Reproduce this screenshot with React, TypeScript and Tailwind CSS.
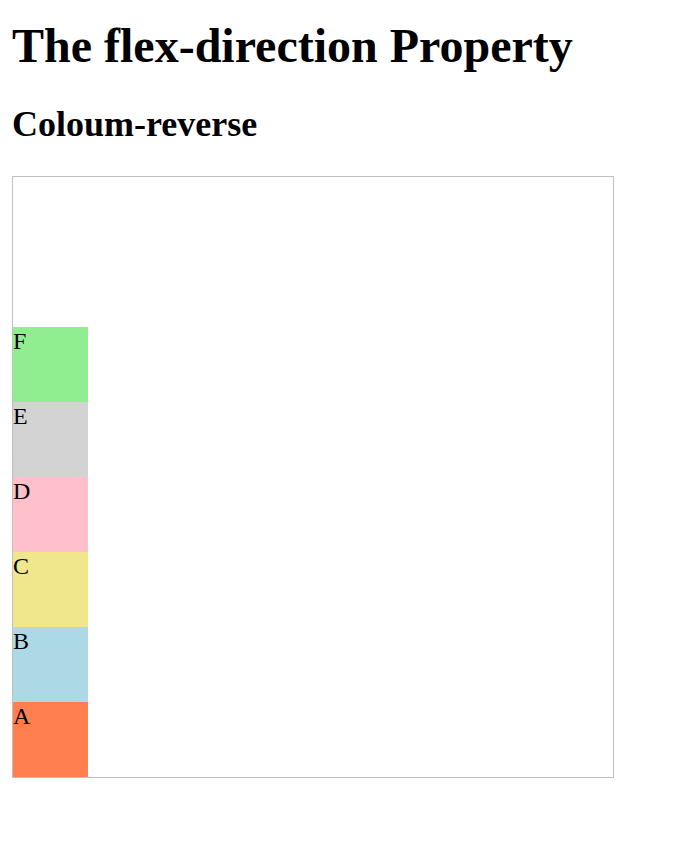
const items = [
  { label: "A", color: "bg-[#ff7f50]" },
  { label: "B", color: "bg-[#add8e6]" },
  { label: "C", color: "bg-[#f0e68c]" },
  { label: "D", color: "bg-[#ffc0cb]" },
  { label: "E", color: "bg-[#d3d3d3]" },
  { label: "F", color: "bg-[#90ee90]" },
];

export default function App() {
  return (
    <div className="min-h-screen bg-white px-[12px] pt-[18px] font-['Liberation_Serif',serif] text-black">
      <h1 className="text-[48px] font-bold leading-[55px]">The flex-direction Property</h1>
      <h2 className="mt-[31px] text-[36px] font-bold leading-[41px]">Coloum-reverse</h2>
      <div className="mt-[31px] flex h-[602px] w-[602px] flex-col-reverse border border-[#c0c0c0]">
        {items.map((item) => (
          <div key={item.label} className={`h-[75px] w-[75px] text-[24px] leading-[28px] ${item.color}`}>
            {item.label}
          </div>
        ))}
      </div>
    </div>
  );
}
